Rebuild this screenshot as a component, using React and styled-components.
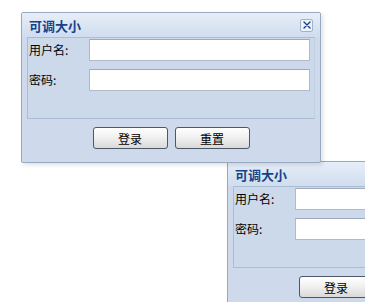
import React from 'react'
import styled, { createGlobalStyle } from 'styled-components'

const GlobalStyle = createGlobalStyle`
  html, body {
    margin: 0;
    padding: 0;
    background: #ffffff;
    overflow: hidden;
  }
  body {
    width: 365px;
    height: 302px;
    position: relative;
    font-family: "Noto Sans CJK SC", "Liberation Sans", sans-serif;
  }
`

const LoginWindow = ({ left, top, z }) => (
  <Frame style={{ left, top, zIndex: z }}>
    <Header>
      <Title>可调大小</Title>
      <Close aria-label="关闭">
        <svg width="10" height="10" viewBox="0 0 10 10">
          <path d="M2 2 L8 8 M8 2 L2 8" stroke="#15428b" strokeWidth="1.4" strokeLinecap="round" />
        </svg>
      </Close>
    </Header>
    <Body>
      <Row>
        <Label>用户名:</Label>
        <Input type="text" />
      </Row>
      <Row>
        <Label>密码:</Label>
        <Input type="password" />
      </Row>
    </Body>
    <Footer>
      <Button>登录</Button>
      <Button>重置</Button>
    </Footer>
  </Frame>
)

const Frame = styled.div`
  position: absolute;
  width: 298px;
  height: 149px;
  display: flex;
  flex-direction: column;
  background: #cedaeb;
  border: 1px solid #98a9c2;
  border-radius: 2px;
  box-shadow: 2px 2px 4px rgba(0, 0, 0, 0.12);
`

const Header = styled.div`
  height: 24px;
  display: flex;
  align-items: center;
  justify-content: space-between;
  padding: 0 7px 0 7px;
  background: linear-gradient(#e6eef8, #d0ddee);
`

const Title = styled.span`
  font-size: 13px;
  font-weight: bold;
  color: #15428b;
  line-height: 1;
`

const Close = styled.div`
  width: 11px;
  height: 11px;
  display: flex;
  align-items: center;
  justify-content: center;
  background: #eef3fa;
  border: 1px solid #9fb3cf;
  border-radius: 2px;
`

const Body = styled.div`
  margin: 0 5px;
  height: 79px;
  padding: 1px 4px 0 1px;
  display: flex;
  flex-direction: column;
  gap: 8px;
  background: #ccd9eb;
  border: 1px solid #a9bdd7;
  border-right-color: #c0d0e4;
`

const Row = styled.div`
  display: flex;
  align-items: center;
  height: 22px;
`

const Label = styled.span`
  width: 60px;
  font-size: 12px;
  color: #000;
  line-height: 1;
`

const Input = styled.input`
  box-sizing: border-box;
  width: 221px;
  height: 22px;
  margin: 0;
  border: 1px solid #b5b8c8;
  border-top-color: #a3a8b8;
  background: #fff;
  outline: none;
`

const Footer = styled.div`
  flex: 1;
  display: flex;
  justify-content: center;
  align-items: flex-start;
  gap: 7px;
  padding-top: 8px;
`

const Button = styled.button`
  box-sizing: border-box;
  width: 75px;
  height: 22px;
  margin: 0;
  padding: 0;
  font-family: "Noto Sans CJK SC", sans-serif;
  font-size: 12px;
  color: #000;
  border: 1px solid #4b5868;
  border-radius: 3px;
  background: linear-gradient(#ffffff 0%, #f1f1f1 45%, #d9d9d9 100%);
  cursor: pointer;
`

const App = () => (
  <>
    <GlobalStyle />
    <LoginWindow left={227} top={161} z={1} />
    <LoginWindow left={21} top={12} z={2} />
  </>
)

export default App
